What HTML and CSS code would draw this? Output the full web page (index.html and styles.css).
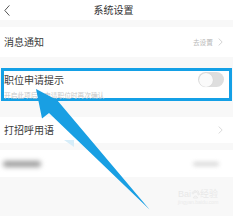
FILE: index.html
```
<!DOCTYPE html>
<html lang="zh-CN">
<head>
<meta charset="utf-8">
<title>系统设置</title>
<link rel="stylesheet" href="styles.css">
</head>
<body>
<div class="page">
  <header class="topbar">
    <span class="back"><svg width="6" height="11" viewBox="0 0 6 11"><polyline points="5.4,0.4 0.8,5.5 5.4,10.6" fill="none" stroke="#555" stroke-width="1"/></svg></span>
    <span class="title">系统设置</span>
    <span></span>
  </header>
  <div class="row row-first">
    <span class="label">消息通知</span>
    <span class="extra"><span class="hint">去设置</span><svg class="chev" width="5" height="8" viewBox="0 0 5 8"><polyline points="0.6,0.5 4.2,4 0.6,7.5" fill="none" stroke="#cfcfcf" stroke-width="0.9"/></svg></span>
  </div>
  <div class="card">
    <div class="card-top">
      <span class="label">职位申请提示</span>
      <span class="toggle"><span class="knob"></span></span>
    </div>
    <div class="sub">开启此项后，申请职位时再次确认</div>
  </div>
  <div class="row row-third">
    <span class="label">打招呼用语</span>
    <svg class="chev" width="5" height="8" viewBox="0 0 5 8"><polyline points="0.6,0.5 4.2,4 0.6,7.5" fill="none" stroke="#d6d6d6" stroke-width="0.9"/></svg>
  </div>
  <div class="row row-blur">
    <span class="blob blob-l"></span>
    <span class="blob blob-r"></span>
  </div>
  <div class="watermark">
    <div class="wm-top">Bai<svg width="9" height="9" viewBox="0 0 9 9"><g fill="none" stroke="#e6e6e6" stroke-width="0.8"><circle cx="2" cy="3" r="1"/><circle cx="4" cy="1.5" r="1"/><circle cx="6.5" cy="1.8" r="1"/><circle cx="7.6" cy="4" r="0.9"/><path d="M2.5 8 C2.5 5.5 6.5 5.5 6.5 8 Z"/></g></svg>经验</div>
    <div class="wm-bottom">jingyan.baidu.com</div>
  </div>
  <svg class="arrow" width="233" height="216" viewBox="0 0 233 216">
    <polygon points="64,140 74,140 74,147" fill="#d6edf9"/>
    <polygon points="36,89 57,100 149.5,209.5 49,113 42,118.5" fill="#199fe3"/>
  </svg>
</div>
</body>
</html>
```

FILE: styles.css
```
html, body {
  margin: 0;
  padding: 0;
}

body {
  background: #f7f7f7;
}

.page {
  position: relative;
  width: 233px;
  height: 216px;
  overflow: hidden;
  background: #f8f8f8;
  font-family: "Noto Sans CJK SC", "Noto Sans", sans-serif;
  color: #3a3a3a;
}

.topbar {
  height: 20px;
  background: #fff;
  display: grid;
  grid-template-columns: 1fr auto 1fr;
  align-items: center;
  padding: 0 10px 0 4px;
}

.back {
  display: flex;
  align-items: center;
}

.title {
  font-size: 10px;
  line-height: 10px;
  color: #333;
}

.row {
  background: #fff;
  display: flex;
  align-items: center;
  justify-content: space-between;
  padding: 0 10px 0 4px;
}

.label {
  font-size: 10px;
  line-height: 10px;
  color: #3c3c3c;
}

.row-first {
  margin-top: 7px;
  height: 30px;
}

.extra {
  display: flex;
  align-items: center;
  gap: 5px;
}

.hint {
  font-size: 6.7px;
  line-height: 7px;
  color: #b8b8b8;
}

.chev {
  display: block;
}

.card {
  margin: 11px 1px 0;
  border: 3px solid #14a0e6;
  background: #fff;
}

.card-top {
  height: 17px;
  display: flex;
  align-items: center;
  justify-content: space-between;
  padding: 0 5px 0 0;
}

.toggle {
  width: 26px;
  height: 15px;
  border-radius: 8px;
  background: #dedede;
  display: flex;
  align-items: center;
  padding-left: 0.5px;
  box-sizing: border-box;
}

.knob {
  width: 14px;
  height: 14px;
  border-radius: 50%;
  background: #fafafa;
  box-shadow: 0 0 1px rgba(0, 0, 0, 0.15);
}

.sub {
  margin-top: 3.5px;
  font-size: 6.7px;
  line-height: 6.5px;
  color: #c8c8c8;
  white-space: nowrap;
}

.row-third {
  margin-top: 16px;
  height: 26px;
}

.row-blur {
  margin-top: 7px;
  height: 27px;
  padding: 0 14px 0 3px;
}

.blob {
  display: block;
  border-radius: 4px;
}

.blob-l {
  width: 38px;
  height: 6px;
  background: #9c9c9c;
  filter: blur(2.4px);
}

.blob-r {
  width: 26px;
  height: 4px;
  background: #d6d6d6;
  filter: blur(2px);
}

.watermark {
  position: absolute;
  left: 178px;
  top: 189px;
  color: #e8e8e8;
  font-family: "Liberation Sans", "Noto Sans CJK SC", sans-serif;
}

.wm-top {
  display: flex;
  align-items: center;
  font-size: 9px;
  line-height: 10px;
}

.wm-bottom {
  font-size: 5px;
  line-height: 6px;
  color: #ebebeb;
}

.arrow {
  position: absolute;
  left: 0;
  top: 0;
}
```
